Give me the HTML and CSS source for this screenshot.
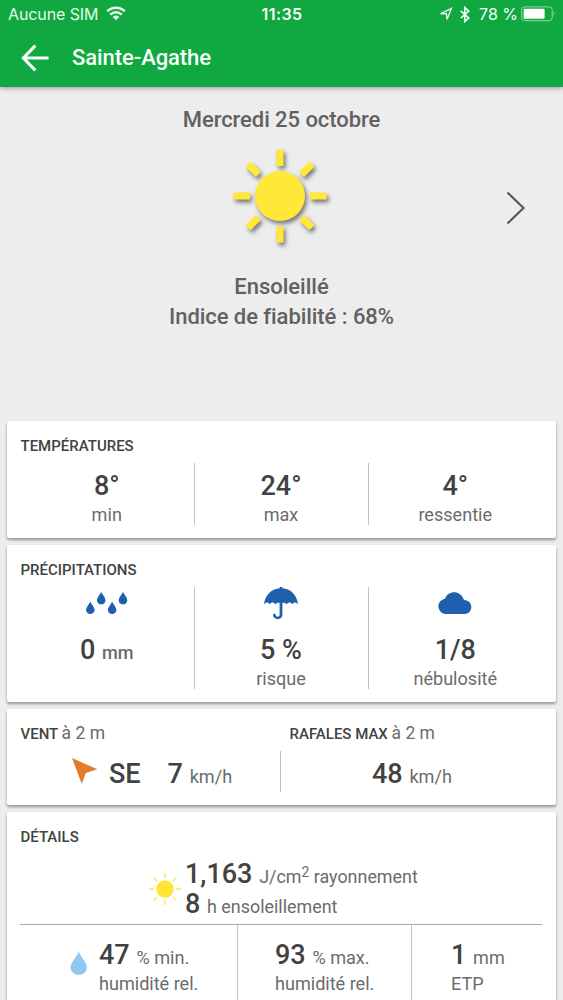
FILE: index.html
```html
<!DOCTYPE html>
<html lang="fr">
<head>
<meta charset="utf-8">
<title>Sainte-Agathe</title>
<link rel="stylesheet" href="styles.css">
</head>
<body>
<header class="header">
  <div class="status">
    <div class="status-left"><span class="carrier">Aucune SIM</span>
      <svg class="wifi" width="20" height="15" viewBox="0 0 20 15" fill="none" stroke="#e9ffec" stroke-width="2.4"><path d="M1.2 5.4a12.4 12.4 0 0 1 17.6 0M4.3 8.6a8.1 8.1 0 0 1 11.4 0"/><path d="M10 14.2L6.7 10.9a4.7 4.7 0 0 1 6.6 0z" fill="#e9ffec" stroke="none"/></svg>
    </div>
    <div class="clock">11:35</div>
    <div class="status-right">
      <svg width="14" height="14" viewBox="0 0 14 14" fill="none" stroke="#d9f7de" stroke-width="1.4"><path d="M1.600 6.700L12.400 1.500 8 12.400 7.400 6.700z"/></svg>
      <svg class="bluetooth" width="10" height="17" viewBox="0 0 10 17" fill="none" stroke="#e9ffec" stroke-width="1.700"><path d="M.8 4.800l8 7.200-4 3.500V1.500l4 3.500-8 7.200"/></svg>
      <span class="percent">78 %</span>
      <svg class="battery" width="35" height="16" viewBox="0 0 35 16"><rect x=".6" y=".9" width="30.600" height="13.800" rx="3" fill="none" stroke="#8fd99e" stroke-width="1"/><rect x="2.600" y="2.800" width="21" height="10" rx="1" fill="#fff"/><path d="M32.600 5.600q2.200 2.200 0 4.400z" fill="#8fd99e"/></svg>
    </div>
  </div>
  <div class="bar">
    <svg class="back" width="28" height="28" viewBox="0 0 28 28" fill="none" stroke="#f4fff5" stroke-width="3.100"><path d="M14.300 1.700L2.400 14l11.900 12.300M2.600 14h25"/></svg>
    <h1 class="place">Sainte-Agathe</h1>
  </div>
</header>

<section class="hero">
  <div class="date">Mercredi 25 octobre</div>
  <svg class="sun" width="110" height="110" viewBox="-55 -55 110 110" fill="#ffe838">
    <circle r="25"/>
    <path d="M-3.500-46.500h7v16.500h-7zM-3.500 30h7v16.500h-7zM-46.500-3.500H-30v7h-16.500zM30-3.500h16.500v7H30z"/>
    <path transform="rotate(45)" d="M-3.500-45h7v14.500h-7zM-3.500 30.500h7V45h-7zM-45-3.500h14.500v7H-45zM30.500-3.500H45v7H30.500z"/>
  </svg>
  <div class="condition">Ensoleillé</div>
  <div class="reliability">Indice de fiabilité : 68%</div>
  <svg class="next" width="22" height="36" viewBox="0 0 22 36" fill="none" stroke="#585858" stroke-width="2.200"><path d="M2.500 2.500L18.500 18 2.500 33.500"/></svg>
</section>

<main class="cards">
  <section class="card temperatures">
    <h2 class="title">TEMPÉRATURES</h2>
    <div class="columns">
      <div class="column"><div class="value">8°</div><div class="label">min</div></div>
      <div class="column"><div class="value">24°</div><div class="label">max</div></div>
      <div class="column"><div class="value">4°</div><div class="label">ressentie</div></div>
    </div>
  </section>

  <section class="card rain">
    <h2 class="title">PRÉCIPITATIONS</h2>
    <div class="columns">
      <div class="column">
        <svg class="icon" width="44" height="36" viewBox="0 0 44 36" fill="#205fae"><path id="drop" d="M16.200 5c2 3.500 4.300 5.700 4.300 8.300a4.300 4 0 0 1-8.600 0c0-2.600 2.300-4.800 4.300-8.300z"/><use href="#drop" x="21.800"/><use href="#drop" x="-10.900" y="9.700"/><use href="#drop" x="10.900" y="9.700"/></svg>
        <div class="value">0 <small class="dark">mm</small></div>
      </div>
      <div class="column">
        <svg class="icon" width="36" height="36" viewBox="0 0 36 36" fill="#205fae"><path d="M1 17.500C2 7 9.500 1.700 16.700 1.200V0h2.600v1.200C27 1.700 34 7 35 17.500c-1.400-2.700-4.300-2.700-5.700-.300-1.500-2.300-4.400-2.300-5.600.300-1-1.600-2.600-2.200-4.300-1.500V28c0 5.500-9.100 5.500-9.400 0 0-1.800 2.600-1.800 2.700 0 .300 2.300 3.900 2.200 3.900 0V16c-1.700-.700-3.300-.100-4.300 1.500-1.200-2.600-4.100-2.600-5.600-.300-1.400-2.400-4.300-2.400-5.700.300z"/></svg>
        <div class="value">5 %</div><div class="label">risque</div>
      </div>
      <div class="column">
        <svg class="icon" width="36" height="36" viewBox="0 0 36 36" fill="#205fae"><path d="M8.500 27A7.700 7.700 0 0 1 8 11.700C11.500 3 23.500 3 27 13c10 .300 9.300 14 .500 14z"/></svg>
        <div class="value">1/8</div><div class="label">nébulosité</div>
      </div>
    </div>
  </section>

  <section class="card wind">
    <div class="wind-half">
      <h2 class="title">VENT <small>à 2 m</small></h2>
      <div class="wind-row mean">
        <svg class="arrow" width="26" height="27" viewBox="0 0 26 27" fill="#e27c2d"><path d="M0 0l25.300 11.300-11.400 3.700-4.200 10.800z"/></svg>
        <span class="value direction">SE</span>
        <span class="value">7 <small>km/h</small></span>
      </div>
    </div>
    <div class="wind-half">
      <h2 class="title">RAFALES MAX <small>à 2 m</small></h2>
      <div class="wind-row gusts"><span class="value">48 <small>km/h</small></span></div>
    </div>
  </section>

  <section class="card details">
    <h2 class="title">DÉTAILS</h2>
    <div class="radiation">
      <svg class="small-sun" width="34" height="34" viewBox="-17 -17 34 34" fill="none" stroke="#f8ec50" stroke-width="1.500"><circle r="8.700" fill="#ffe632" stroke="none"/><path d="M0-16v5M0 11v5M-16 0h5M11 0h5M-11.300-11.300l3.500 3.500M7.800 7.800l3.500 3.500M-11.300 11.300l3.500-3.500M7.800-7.800l3.500-3.500"/></svg>
      <div>
        <div class="value">1,163 <small>J/cm<sup>2</sup> rayonnement</small></div>
        <div class="value">8 <small>h ensoleillement</small></div>
      </div>
    </div>
    <div class="humidity">
      <div class="cell first">
        <svg class="water" width="18" height="26" viewBox="0 0 18 26" fill="#90c8f3"><path d="M8.700.800C12 7.500 17 12 17 17a8.300 8 0 0 1-16.500 0c0-5 5-9.500 8.200-16.200z"/></svg>
        <div><div class="value">47 <small>% min.</small></div><div class="label">humidité rel.</div></div>
      </div>
      <div class="cell second"><div class="value">93 <small>% max.</small></div><div class="label">humidité rel.</div></div>
      <div class="cell third"><div class="value">1 <small>mm</small></div><div class="label">ETP</div></div>
    </div>
  </section>
</main>
</body>
</html>
```

FILE: styles.css
```css
* { box-sizing: border-box; }
html, body { margin: 0; height: 1000px; overflow: hidden; }
body {
  width: 563px;
  background: #ededee;
  font-family: Roboto, sans-serif;
  color: #424242;
}
svg { display: block; flex: none; }
h1, h2 { margin: 0; font-weight: 500; }

.header {
  height: 87px;
  background: #11a841;
  color: #f4fff5;
  box-shadow: 0 1px 5px rgba(0, 0, 0, .38);
}
.status {
  display: grid;
  grid-template-columns: 1fr auto 1fr;
  height: 28px;
  padding: 0 7px 0 8px;
  align-items: center;
  font: 16px/28px Inter, sans-serif;
}
.status-left, .status-right { display: flex; align-items: center; }
.status-right { justify-content: flex-end; }
.carrier { letter-spacing: -.1px; color: #e3fbe6; }
.wifi { margin: -1px 0 0 8px; }
.clock { font-weight: 600; letter-spacing: .4px; }
.bluetooth { margin-left: 7px; }
.percent { margin: 0 3px 0 9px; }
.bar { display: flex; align-items: center; height: 59px; padding: 0 21px; }
.place { margin-left: 23px; font-size: 22px; line-height: 30px; letter-spacing: -.07px; }

.hero {
  position: relative;
  display: flex;
  flex-direction: column;
  align-items: center;
  height: 334px;
  padding-top: 18px;
  font-size: 22px;
  font-weight: 500;
  line-height: 30px;
  color: #616161;
}
.sun { margin: 6px 4px 21px 0; filter: drop-shadow(2px 3px 2px rgba(0, 0, 0, .5)); }
.date, .reliability { letter-spacing: -.06px; }
.next { position: absolute; right: 36px; top: 103px; }

.cards { display: grid; gap: 7px; padding: 0 7px; }
.card {
  padding: 15px 14px 0 13px;
  background: #fff;
  border-radius: 2px;
  box-shadow: 0 2px 3px rgba(0, 0, 0, .38);
}
.title {
  padding-left: .5px;
  font-size: 15px;
  line-height: 20px;
  white-space: nowrap;
}
.title small { font-size: 17.500px; line-height: 0; font-weight: 400; color: #6b6b6b; }
.value { font-size: 27px; font-weight: 500; line-height: 32px; white-space: nowrap; }
.value small, .label { font-size: 18.100px; font-weight: 400; color: #6b6b6b; }
.value small { line-height: 0; }
.value small.dark { font-weight: 500; }
.label { margin-top: 1px; line-height: 24px; white-space: nowrap; }

.columns {
  display: grid;
  grid-template-columns: 173.500px 174px 1fr;
  margin-top: 7px;
  text-align: center;
}
.column + .column { border-left: 1px solid #c2c2c2; }
.temperatures { height: 117px; }
.temperatures .columns { height: 62px; }
.temperatures .column { height: 62px; padding-top: 7px; }
.rain { height: 157px; }
.rain .columns { height: 102px; }
.rain .column { height: 102px; }
.icon { margin: 0 auto 11px; }

.wind { display: grid; grid-template-columns: 269px 1fr; height: 96px; }
.wind-row { display: flex; align-items: center; height: 41px; margin-top: 7px; padding-top: 5px; }
.mean { padding-left: 52px; border-right: 1px solid #c2c2c2; margin-right: 8px; }
.arrow { margin-top: -6px; }
.direction { margin: 0 27px 0 11px; }
.gusts { padding-left: 83px; }

.details { height: 188px; border-radius: 2px 2px 0 0; }
.radiation { display: flex; height: 77px; padding: 12px 0 0 128px; }
.small-sun { margin: 13px 3px 0 0; }
.radiation .value { line-height: 30px; }
.radiation small { font-size: 17.900px; }
sup { font-size: 14px; line-height: 0; vertical-align: 6px; }
.humidity {
  display: grid;
  grid-template-columns: 217px 174px 1fr;
  height: 76px;
  border-top: 1px solid #aaa;
}
.cell { padding-top: 14px; }
.cell + .cell { border-left: 1px solid #c2c2c2; }
.cell .label { letter-spacing: -.02px; }
.first { display: flex; padding-left: 50px; }
.water { margin: 12px 11px 0 0; }
.second { padding-left: 37px; }
.third { padding-left: 39px; }
```
